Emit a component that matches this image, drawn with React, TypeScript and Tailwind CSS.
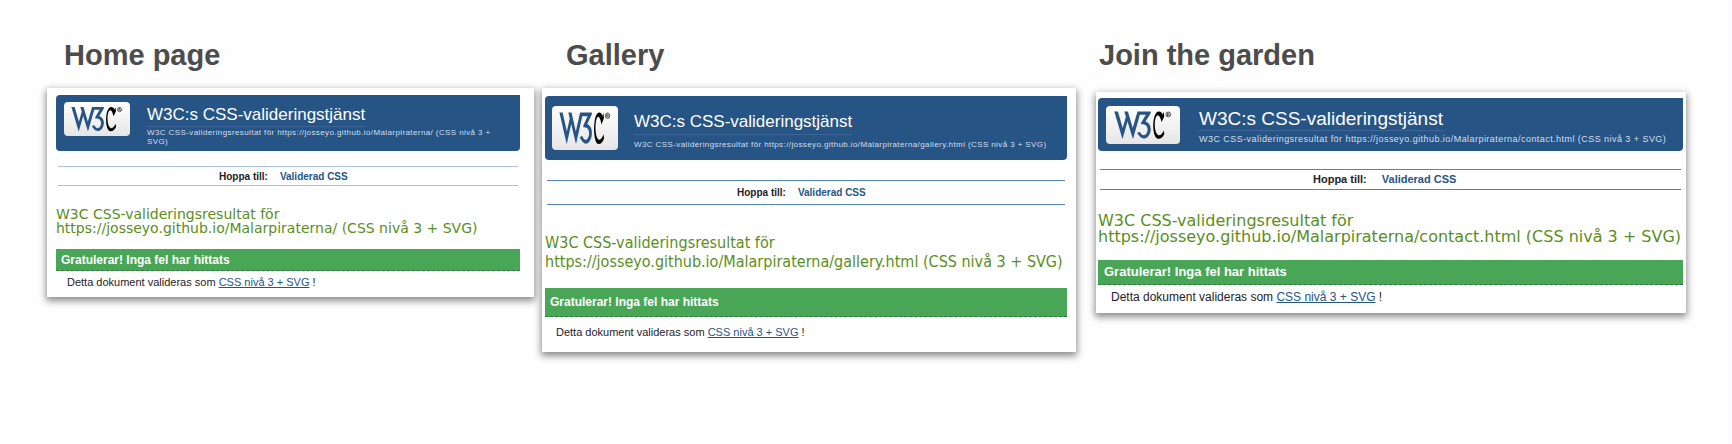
import React from 'react';

type Style = {
  card: string; header: string; logo: string; titles: string; title: string; sub: string;
  jump: string; jumpGap: string; result: string; bar: string; note: string;
};
type Report = { heading: string; headingClass: string; url: string; style: Style };

const reports: Report[] = [
  {
    heading: 'Home page', headingClass: 'pl-[17px]', url: 'https://josseyo.github.io/Malarpiraterna/',
    style: {
      card: 'mt-[16px] pt-[7px] pr-[14px] pb-[7px] pl-[9px]',
      header: 'h-[56px] pl-[8px] pt-[7px]',
      logo: 'h-[34px] w-[66px]',
      titles: 'pl-[17px] pt-[2px]',
      title: 'text-[17px] leading-[22px]',
      sub: 'text-[8px] leading-[9px] mt-[1px] pr-4',
      jump: 'mt-[15px] h-[20px] text-[10px] border-[#a9c4dc] pl-[161px] mx-[2px]',
      jumpGap: 'gap-[12px]',
      result: "mt-[21px] text-[14px] leading-[14px] font-['DejaVu_Sans',sans-serif]",
      bar: 'mt-[14px] h-[22px] text-[12px] pl-[5px]',
      note: 'mt-[3px] text-[11px] leading-[16px] pl-[11px]',
    },
  },
  {
    heading: 'Gallery', headingClass: 'pl-[24px]', url: 'https://josseyo.github.io/Malarpiraterna/gallery.html',
    style: {
      card: 'mt-[16px] pt-[8px] pr-[9px] pb-[10px] pl-[3px]',
      header: 'h-[64px] pl-[7px] pt-[10px]',
      logo: 'h-[44px] w-[66px]',
      titles: 'pl-[16px] pt-[3px]',
      title: 'text-[17px] leading-[25px]',
      sub: 'text-[8px] leading-[12px] mt-[4px] whitespace-nowrap',
      jump: 'mt-[20px] h-[25px] text-[10px] border-[#4f86b8] pl-[190px] mx-[2px]',
      jumpGap: 'gap-[12px]',
      result: "mt-[28px] text-[16px] leading-[19px] font-['DejaVu_Sans_Condensed','DejaVu_Sans',sans-serif]",
      bar: 'mt-[17px] h-[29px] text-[12px] pl-[5px]',
      note: 'mt-[5px] text-[11px] leading-[20px] pl-[11px]',
    },
  },
  {
    heading: 'Join the garden', headingClass: 'pl-[3px]', url: 'https://josseyo.github.io/Malarpiraterna/contact.html',
    style: {
      card: 'mt-[20px] pt-[6px] pr-[3px] pb-[7px] pl-[2px]',
      header: 'h-[53px] pl-[8px] pt-[8px]',
      logo: 'h-[38px] w-[74px]',
      titles: 'pl-[19px] pt-[2px]',
      title: 'text-[19px] leading-[22px]',
      sub: 'text-[9px] leading-[10px] mt-[3px] whitespace-nowrap',
      jump: 'mt-[18px] h-[21px] text-[11px] border-[#4f86b8] pl-[213px] mx-[2px]',
      jumpGap: 'gap-[15px]',
      result: "mt-[23px] text-[16px] leading-[16px] font-['DejaVu_Sans',sans-serif]",
      bar: 'mt-[15px] h-[25px] text-[13px] pl-[6px]',
      note: 'mt-[3px] text-[12px] leading-[18px] pl-[13px]',
    },
  },
];

function Logo({ className }: { className: string }) {
  return (
    <span className={`flex shrink-0 rounded-[4px] bg-linear-to-b from-white to-[#e6e6e6] ${className}`}>
      <svg viewBox="0 0 74 38" preserveAspectRatio="none" className="h-full w-full" role="img" aria-label="W3C">
        <g transform="translate(7.5 3.6) scale(.4)">
          <path fill="#265485" d="M36 5l12 41l12-41h33v4l-13 21c30 10 2 69-21 28l7-2c15 27 33-22 3-19v-4l12-20h-15l-17 59h-1l-13-42l-12 42h-1l-20-67h9l12 41l8-28l-4-13z" />
          <path d="M125 5l2 12-7 14s-3-16-9-17c-9 0-11 38-1 48 6 6 12-2 16-10l1 9c-3 7-8 12-15 12-17 0-17-67 1-68 6 0 9 4 10 8z" />
          <circle cx="137" cy="12" r="6" fill="none" stroke="#333" strokeWidth="2" />
          <path fill="none" stroke="#333" strokeWidth="2" d="M135 16V9h3q3 2 0 4h-3m3 0l2 3" />
        </g>
      </svg>
    </span>
  );
}

function ReportCard({ report }: { report: Report }) {
  const { style: s, url } = report;
  return (
    <article className={`bg-white text-[#1f2225] shadow-[0_3px_7px_1px_rgba(0,0,0,0.45)] ${s.card}`}>
      <header className={`flex items-start rounded-l-[4px] rounded-br-[4px] bg-[#265485] ${s.header}`}>
        <Logo className={s.logo} />
        <div className={s.titles}>
          <h2 className={`w-fit border-b border-[#3f6598] whitespace-nowrap text-white ${s.title}`}>W3C:s CSS-valideringstjänst</h2>
          <p className={`tracking-wider text-[#d5dfeb] ${s.sub}`}>W3C CSS-valideringsresultat för {url} (CSS nivå 3 + SVG)</p>
        </div>
      </header>
      <nav className={`flex items-center border-y font-bold whitespace-nowrap ${s.jump} ${s.jumpGap}`}>
        <span>Hoppa till:</span>
        <a href="#css" className="text-[#265485]">Validerad CSS</a>
      </nav>
      <h3 className={`whitespace-nowrap text-[#5a8e1c] ${s.result}`}>
        W3C CSS-valideringsresultat för<br />{url} (CSS nivå 3 + SVG)
      </h3>
      <h4 className={`flex items-center border-b border-dashed border-[#34763f] bg-[#4aa657] font-bold whitespace-nowrap text-white ${s.bar}`}>
        Gratulerar! Inga fel har hittats
      </h4>
      <p className={`whitespace-nowrap ${s.note}`}>
        Detta dokument valideras som <a href="#css" className="text-[#265485] underline">CSS nivå 3 + SVG</a> !
      </p>
    </article>
  );
}

export default function App() {
  return (
    <main className="grid min-h-screen grid-cols-[487fr_534fr_602fr] content-start items-start gap-x-2 border-r-4 border-[#fafaff] bg-[#fefefe] pt-[38px] pr-[42px] pl-[47px] font-['Liberation_Sans',Arial,sans-serif]">
      {reports.map((r, i) => (
        <section key={r.heading} className={i === 2 ? 'min-w-0 pl-3' : 'min-w-0'}>
          <h1 className={`text-[29px] leading-[34px] font-bold text-[#4c4c4c] ${r.headingClass}`}>{r.heading}</h1>
          <ReportCard report={r} />
        </section>
      ))}
    </main>
  );
}
